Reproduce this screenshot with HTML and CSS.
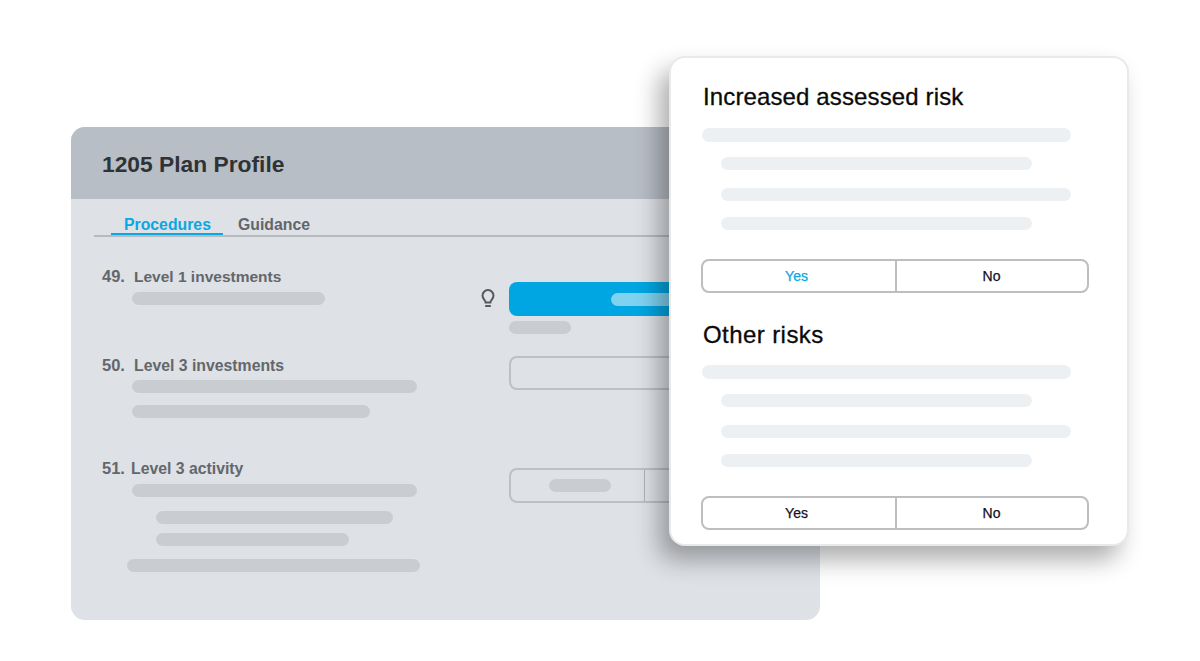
FILE: index.html
```html
<!DOCTYPE html>
<html lang="en">
<head>
<meta charset="utf-8">
<title>1205 Plan Profile</title>
<link rel="stylesheet" href="styles.css">
</head>
<body>
<main class="stage">
  <section class="panel">
    <header class="panel-head"><h1>1205 Plan Profile</h1></header>
    <div class="panel-body">
      <nav class="tabs">
        <span class="tab tab-active">Procedures</span>
        <span class="tab">Guidance</span>
      </nav>
      <div class="row row-49">
        <div class="q">
          <div class="q-title"><span class="num">49.</span><span class="q-name">Level 1 investments</span></div>
          <div class="ph ph-dark w193 q-indent"></div>
        </div>
        <svg class="bulb" viewBox="0 0 16 20" width="16" height="20" fill="none" stroke="#55595c" stroke-width="2" aria-hidden="true">
          <path d="M5.6 13.4c0-2.2-3.1-3.2-3.1-6.8a5.5 5.5 0 0 1 11 0c0 3.6-3.1 4.6-3.1 6.8z"/>
          <path d="M5.2 17h5.6" stroke-width="2"/>
        </svg>
        <div class="ctl">
          <div class="btn-blue"><span class="blue-pill"></span></div>
          <div class="ph ph-dark w62 under"></div>
        </div>
      </div>
      <div class="row row-50">
        <div class="q">
          <div class="q-title"><span class="num">50.</span><span class="q-name">Level 3 investments</span></div>
          <div class="ph ph-dark w285 q-indent"></div>
          <div class="ph ph-dark w238 q-indent gap12"></div>
        </div>
        <div class="ctl ctl-plain"><div class="input"></div></div>
      </div>
      <div class="row row-51">
        <div class="q">
          <div class="q-title"><span class="num">51.</span><span class="q-name q-name-tight">Level 3 activity</span></div>
          <div class="ph ph-dark w285 q-indent"></div>
          <div class="ph ph-dark w237 q-indent2 gap14"></div>
          <div class="ph ph-dark w193 q-indent2 gap9"></div>
          <div class="ph ph-dark w293 q-indent3 gap13"></div>
        </div>
        <div class="ctl ctl-plain ctl-seg">
          <div class="input input-seg"><div class="cell"><span class="ph ph-dark w62"></span></div></div>
        </div>
      </div>
    </div>
  </section>

  <section class="card">
    <h2>Increased assessed risk</h2>
    <div class="ph ph-light wide first"></div>
    <div class="ph ph-light mid indent g15"></div>
    <div class="ph ph-light long indent g18"></div>
    <div class="ph ph-light mid indent g16"></div>
    <div class="seg seg-1">
      <span class="seg-opt seg-on">Yes</span>
      <span class="seg-opt">No</span>
    </div>
    <h2 class="h2-next">Other risks</h2>
    <div class="ph ph-light wide first2"></div>
    <div class="ph ph-light mid indent g15"></div>
    <div class="ph ph-light long indent g18"></div>
    <div class="ph ph-light mid indent g16"></div>
    <div class="seg seg-2">
      <span class="seg-opt">Yes</span>
      <span class="seg-opt">No</span>
    </div>
  </section>
</main>
</body>
</html>
```
FILE: styles.css
```css
* { box-sizing: border-box; }
html, body { margin: 0; height: 100%; }
body { background: #fff; font-family: "Liberation Sans", Arial, sans-serif; overflow: hidden; }
.stage { position: relative; width: 1200px; height: 661px; overflow: hidden; }

/* back window */
.panel {
  position: absolute; left: 71px; top: 127px; width: 749px; height: 493px;
  border-radius: 14px; overflow: hidden; background: #dee1e6;
}
.panel-head { height: 72px; background: #b8bec6; padding: 2px 0 0 31px; display: flex; align-items: center; }
.panel-head h1 { margin: 0; font-size: 22.8px; font-weight: 700; color: #2f3336; }
.panel-body { padding: 0 0 0 23px; }
.tabs { display: flex; height: 38px; border-bottom: 2px solid #b8bbbe; padding: 15px 0 0 17px; align-items: flex-end; }
.tab { font-size: 15.8px; font-weight: 700; color: #62666a; height: 23px; padding-top: 4px; line-height: 18px; }
.tab-active { color: #0ba7e2; width: 112px; padding-left: 13px; margin-right: 15px; border-bottom: 2px solid #0ba7e2; }

.row { display: flex; align-items: flex-start; padding-left: 8px; }
.row-49 { margin-top: 30px; height: 89px; }
.row-50 { height: 103px; }
.q { width: 407px; flex: none; margin-top: -1px; }
.q-title { display: flex; align-items: baseline; font-size: 15.5px; font-weight: 700; color: #63676b; line-height: 20px; height: 20px; margin-bottom: 6px; }
.row-50 .q-name, .row-51 .q-name { font-size: 15.8px; }
.num { width: 32px; flex: none; font-size: 16.5px; }
.q-name-tight { margin-left: -3px; }
.row-50 .q-title { margin-bottom: 5px; }

.ph { display: block; height: 13px; border-radius: 7px; }
.ph-dark { background: #c9cdd2; }
.ph-light { background: #edf0f3; }
.w62 { width: 62px; } .w193 { width: 193px; } .w237 { width: 237px; } .w238 { width: 238px; } .w285 { width: 285px; } .w293 { width: 293px; }
.q-indent { margin-left: 30px; }
.q-indent2 { margin-left: 54px; }
.q-indent3 { margin-left: 25px; }
.gap9 { margin-top: 9px; } .gap12 { margin-top: 12px; } .gap13 { margin-top: 13px; } .gap14 { margin-top: 14px; }

.bulb { flex: none; margin: 22px 0 0 -29px; }
.ctl { margin-left: 13px; flex: 1; }
.ctl-plain { margin-left: 0; }
.ctl-seg { margin-top: 9px; }
.btn-blue { height: 34px; width: 270px; margin-top: 15px; background: #00a6e2; border-radius: 8px; display: flex; align-items: center; padding-left: 102px; }
.blue-pill { display: block; width: 90px; height: 13px; border-radius: 7px; background: #80d2f1; }
.under { margin-top: 5px; }
.input { width: 270px; height: 34px; border: 2px solid #bcc0c4; border-radius: 8px; }
.input-seg { height: 35px; display: flex; }
.cell { width: 134px; border-right: 1px solid #aeb2b6; padding-left: 4px; display: flex; align-items: center; justify-content: center; }

/* front card */
.card {
  position: absolute; left: 669px; top: 56px; width: 460px; height: 490px;
  background: #fff; border: 2px solid #e8e9ea; border-radius: 16px;
  padding: 24px 0 0 31px;
  box-shadow: -10px 14px 24px rgba(0, 0, 0, .32);
}
.card h2 { margin: 0 0 0 1px; font-size: 24px; font-weight: 400; line-height: 30px; color: #0a0a0a; letter-spacing: .13px; -webkit-text-stroke: .3px #0a0a0a; }
.wide { width: 369px; height: 14px; }
.long { width: 350px; }
.mid { width: 311px; }
.indent { margin-left: 19px; }
.first { margin-top: 16px; }
.first2 { margin-top: 15px; }
.g15 { margin-top: 15px; }
.g18 { margin-top: 18px; }
.g16 { margin-top: 16px; }
.seg { display: flex; width: 388px; height: 34px; margin-left: -1px; border: 2px solid #bdbebf; border-radius: 8px; font-size: 14px; color: #10121f; -webkit-text-stroke: .25px #10121f; }
.seg-1, .seg-2 { margin-top: 29px; }
.seg-opt { flex: 1; display: flex; align-items: center; justify-content: center; padding-right: 1px; }
.seg-opt:first-child { flex: none; width: 194px; border-right: 2px solid #bdbebf; padding-right: 5px; }
.seg-on { color: #0ba7e2; -webkit-text-stroke: .25px #0ba7e2; }
.card .h2-next { margin-top: 27px; letter-spacing: .42px; }
```
